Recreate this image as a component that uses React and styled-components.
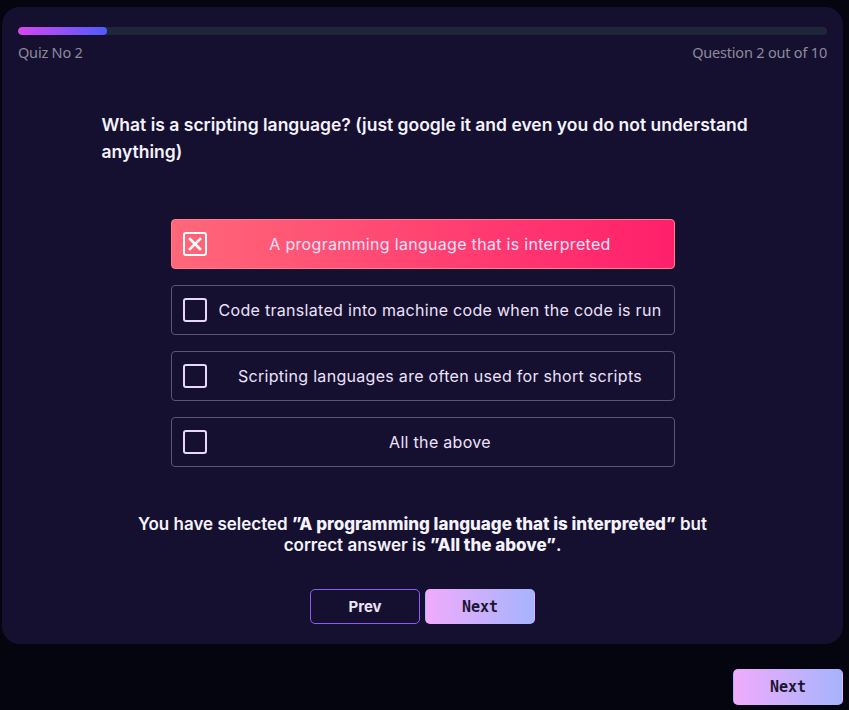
import React, { useState } from 'react'
import styled, { createGlobalStyle } from 'styled-components'

const GlobalStyle = createGlobalStyle`
  body {
    margin: 0;
    background: #05050f;
    font-family: Inter, "Noto Sans", sans-serif;
  }
`

const options = [
  'A programming language that is interpreted',
  'Code translated into machine code when the code is run',
  'Scripting languages are often used for short scripts',
  'All the above',
]

const App = () => {
  const [selected] = useState(0)
  const current = 2
  const total = 10

  return (
    <>
      <GlobalStyle />
      <Page>
        <Card>
          <Track>
            <Fill style={{ width: `${(current / total) * 55}%` }} />
          </Track>
          <Meta>
            <span>Quiz No 2</span>
            <span>Question {current} out of {total}</span>
          </Meta>
          <Question>
            What is a scripting language? (just google it and even you do not
            understand anything)
          </Question>
          <Options>
            {options.map((text, i) => (
              <Option key={text} $active={i === selected}>
                <Box $active={i === selected}>
                  {i === selected && (
                    <svg width='14' height='14' viewBox='0 0 14 14'>
                      <path
                        d='M2 2 L12 12 M12 2 L2 12'
                        stroke='#fff'
                        strokeWidth='2.6'
                        strokeLinecap='square'
                      />
                    </svg>
                  )}
                </Box>
                <OptionText>{text}</OptionText>
              </Option>
            ))}
          </Options>
          <Feedback>
            You have selected <b>”A programming language that is interpreted”</b> but
            correct answer is <b>”All the above”</b>.
          </Feedback>
          <Actions>
            <Button $outline>Prev</Button>
            <Button>Next</Button>
          </Actions>
        </Card>
        <Footer>
          <Button $big>Next</Button>
        </Footer>
      </Page>
    </>
  )
}

export default App

const Page = styled.div`
  padding: 7px 6px 0 2px;
`

const Card = styled.div`
  background: #161030;
  border-radius: 18px;
  padding: 20px 16px 20px 16px;
  display: flex;
  flex-direction: column;
  align-items: center;
`

const Track = styled.div`
  width: 100%;
  height: 8px;
  border-radius: 4px;
  background: #1e2739;
  overflow: hidden;
`

const Fill = styled.div`
  height: 100%;
  border-radius: 4px;
  background: linear-gradient(90deg, #d946ef, #4f5bff);
`

const Meta = styled.div`
  width: 100%;
  display: flex;
  justify-content: space-between;
  margin-top: 7px;
  font-family: "Noto Sans", sans-serif;
  font-size: 14.5px;
  color: #8d8a9c;
  letter-spacing: -0.2px;
`

const Question = styled.h2`
  width: 650px;
  margin: 49px 0 0 8px;
  font-size: 17.5px;
  font-weight: 600;
  line-height: 27px;
  color: #f4f2fa;
`

const Options = styled.div`
  width: 504px;
  margin-top: 54px;
  display: flex;
  flex-direction: column;
  gap: 16px;
`

const Option = styled.div`
  height: 50px;
  box-sizing: border-box;
  display: flex;
  align-items: center;
  padding: 0 0 0 11px;
  border-radius: 4px;
  border: 1px solid ${(p) => (p.$active ? '#ff7d8e' : '#5b556f')};
  background: ${(p) =>
    p.$active ? 'linear-gradient(90deg, #ff6879, #ff1f6b)' : 'transparent'};
`

const Box = styled.div`
  width: 24px;
  height: 24px;
  box-sizing: border-box;
  border: 2px solid ${(p) => (p.$active ? '#fff' : '#e6d8fb')};
  border-radius: 3px;
  display: flex;
  align-items: center;
  justify-content: center;
  flex-shrink: 0;
`

const OptionText = styled.div`
  flex: 1;
  text-align: center;
  font-size: 16px;
  letter-spacing: 0.3px;
  color: #ece2fb;
  white-space: nowrap;
`

const Feedback = styled.p`
  width: 600px;
  margin: 47px 0 0 0;
  text-align: center;
  font-size: 17px;
  font-weight: 600;
  line-height: 21px;
  color: #f4f2fa;
  & b {
    font-weight: 800;
  }
`

const Actions = styled.div`
  display: flex;
  gap: 5px;
  margin-top: 33px;
`

const Button = styled.button`
  width: 110px;
  height: ${(p) => (p.$big ? '36px' : '35px')};
  border-radius: 5px;
  font-family: ${(p) =>
    p.$outline ? 'Inter, sans-serif' : '"DejaVu Sans Mono", monospace'};
  font-size: 15px;
  font-weight: 700;
  cursor: pointer;
  border: 1px solid ${(p) => (p.$outline ? '#8b5cf6' : 'transparent')};
  color: ${(p) => (p.$outline ? '#ece2fb' : '#1b1730')};
  background: ${(p) =>
    p.$outline ? 'transparent' : 'linear-gradient(90deg, #f0abfc, #a5b4fc)'};
`

const Footer = styled.div`
  display: flex;
  justify-content: flex-end;
  margin-top: 25px;
`
